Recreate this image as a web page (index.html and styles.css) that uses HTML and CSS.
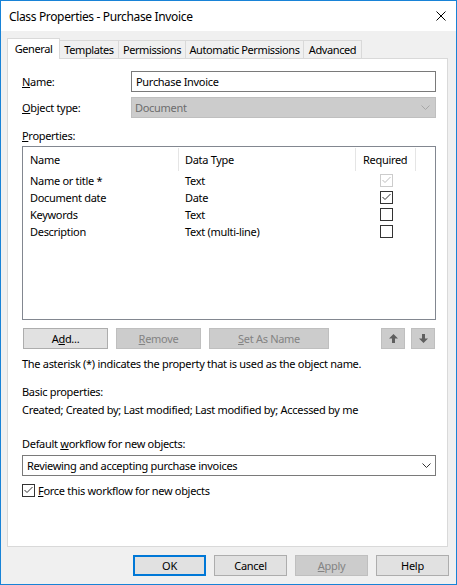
FILE: index.html
```html
<!DOCTYPE html>
<html>
<head>
<meta charset="utf-8">
<title>Class Properties - Purchase Invoice</title>
<link rel="stylesheet" href="styles.css">
</head>
<body>
<div class="window">
  <div class="titlebar">
    <span class="title">Class Properties - Purchase Invoice</span>
    <svg class="close" width="10" height="10" viewBox="0 0 10 10"><path d="M0.5 0.5L9.5 9.5M9.5 0.5L0.5 9.5" stroke="#000" stroke-width="1" fill="none"/></svg>
  </div>
  <div class="client">
    <div class="tabs">
      <div class="tab sel t-general">General</div>
      <div class="tab t-templates">Templates</div>
      <div class="tab t-perm">Permissions</div>
      <div class="tab t-auto">Automatic Permissions</div>
      <div class="tab t-adv">Advanced</div>
      <div class="tab-fill"></div>
    </div>
    <div class="panel">
      <div class="form-grid">
        <div class="lbl"><u>N</u>ame:</div>
        <div class="input">Purchase Invoice</div>
        <div class="lbl"><u>O</u>bject type:</div>
        <div class="combo disabled"><span>Document</span><svg class="chev" width="9" height="5" viewBox="0 0 9 5"><polyline points="0.5,0.5 4.5,4.5 8.5,0.5" fill="none" stroke="#a6a6a6" stroke-width="1"/></svg></div>
      </div>
      <div class="section-label"><u>P</u>roperties:</div>
      <div class="listbox">
        <div class="lv-row lv-head">
          <div class="c1">Name</div>
          <div class="c2">Data Type</div>
          <div class="c3">Required</div>
          <div class="c4"></div>
        </div>
        <div class="lv-row">
          <div class="c1">Name or title *</div>
          <div class="c2">Text</div>
          <div class="c3 cb"><svg width="13" height="13" viewBox="0 0 13 13"><rect x="0.5" y="0.5" width="12" height="12" fill="#fff" stroke="#cccccc"/><polyline points="2.5,6 5,8.5 10.5,3" fill="none" stroke="#bcbcbc" stroke-width="1"/></svg></div>
          <div class="c4"></div>
        </div>
        <div class="lv-row">
          <div class="c1">Document date</div>
          <div class="c2">Date</div>
          <div class="c3 cb"><svg width="13" height="13" viewBox="0 0 13 13"><rect x="0.5" y="0.5" width="12" height="12" fill="#fff" stroke="#333333"/><polyline points="2.5,6 5,8.5 10.5,3" fill="none" stroke="#333333" stroke-width="1"/></svg></div>
          <div class="c4"></div>
        </div>
        <div class="lv-row">
          <div class="c1">Keywords</div>
          <div class="c2">Text</div>
          <div class="c3 cb"><svg width="13" height="13" viewBox="0 0 13 13"><rect x="0.5" y="0.5" width="12" height="12" fill="#fff" stroke="#333333"/></svg></div>
          <div class="c4"></div>
        </div>
        <div class="lv-row">
          <div class="c1">Description</div>
          <div class="c2">Text (multi-line)</div>
          <div class="c3 cb"><svg width="13" height="13" viewBox="0 0 13 13"><rect x="0.5" y="0.5" width="12" height="12" fill="#fff" stroke="#333333"/></svg></div>
          <div class="c4"></div>
        </div>
      </div>
      <div class="btn-row">
        <div class="btn btn-add">A<u>d</u>d...</div>
        <div class="btn disabled btn-remove"><u>R</u>emove</div>
        <div class="btn disabled btn-setname"><u>S</u>et As Name</div>
        <div class="arrows">
          <div class="btn disabled btn-arrow"><svg width="9" height="9" viewBox="0 0 9 9"><path d="M4.5 0L9 4.5H6V9H3V4.5H0Z" fill="#5f5f5f"/></svg></div>
          <div class="btn disabled btn-arrow"><svg width="9" height="9" viewBox="0 0 9 9"><path d="M4.5 9L9 4.5H6V0H3V4.5H0Z" fill="#5f5f5f"/></svg></div>
        </div>
      </div>
      <div class="note">The asterisk (*) indicates the property that is used as the object name.</div>
      <div class="basic">
        <div>Basic properties:</div>
        <div>Created; Created by; Last modified; Last modified by; Accessed by me</div>
      </div>
      <div class="wf-label">Default <u>w</u>orkflow for new objects:</div>
      <div class="combo wf"><span>Reviewing and accepting purchase invoices</span><svg class="chev" width="9" height="5" viewBox="0 0 9 5"><polyline points="0.5,0.5 4.5,4.5 8.5,0.5" fill="none" stroke="#333333" stroke-width="1"/></svg></div>
      <div class="check-row">
        <svg width="13" height="13" viewBox="0 0 13 13"><rect x="0.5" y="0.5" width="12" height="12" fill="#fff" stroke="#333333"/><polyline points="2.5,6 5,8.5 10.5,3" fill="none" stroke="#333333" stroke-width="1"/></svg>
        <span><u>F</u>orce this workflow for new objects</span>
      </div>
    </div>
    <div class="footer">
      <div class="btn default">OK</div>
      <div class="btn">Cancel</div>
      <div class="btn disabled"><u>A</u>pply</div>
      <div class="btn">Help</div>
    </div>
  </div>
</div>
</body>
</html>
```

FILE: styles.css
```css
* { box-sizing: border-box; }
html, body { margin: 0; padding: 0; }
body {
  width: 457px;
  height: 585px;
  font-family: "Noto Sans", "Open Sans", sans-serif;
  font-size: 11px;
  letter-spacing: -0.3px;
  line-height: 15px;
  color: #000;
  background: #fff;
}
u { text-decoration: underline; text-underline-offset: 1px; }

.window {
  width: 457px;
  height: 585px;
  border: 1px solid #1883d7;
  background: #f0f0f0;
  display: flex;
  flex-direction: column;
}

.titlebar {
  height: 30px;
  flex: none;
  background: #fff;
  display: flex;
  align-items: center;
  justify-content: space-between;
  padding: 0 10px 0 8px;
}
.title { font-size: 12px; letter-spacing: -0.35px; }
.close { display: block; }

.client {
  flex: 1;
  min-height: 0;
  display: flex;
  flex-direction: column;
  padding: 7px 8px 8px 6px;
}

.tabs {
  flex: none;
  height: 21px;
  display: flex;
  align-items: flex-end;
}
.tab {
  height: 19px;
  border: 1px solid #d9d9d9;
  border-left: none;
  background: #f0f0f0;
  display: flex;
  align-items: center;
  justify-content: center;
  white-space: nowrap;
  letter-spacing: -0.4px;
}
.tab.sel {
  height: 21px;
  border-left: 1px solid #d9d9d9;
  border-bottom: none;
  background: #fff;
  padding-bottom: 1px;
}
.t-general { width: 53px; }
.t-templates { width: 59px; }
.t-perm { width: 67px; }
.t-auto { width: 118px; }
.t-adv { width: 58px; }
.tab-fill { flex: 1; height: 1px; background: #d9d9d9; }

.panel {
  flex: 1;
  background: #fff;
  border: 1px solid #d9d9d9;
  border-top: none;
  padding: 12px 11px 0 14px;
  display: flex;
  flex-direction: column;
}

.form-grid {
  display: grid;
  grid-template-columns: 109px 1fr;
  grid-auto-rows: 21px;
  row-gap: 5px;
  align-items: center;
}
.input {
  height: 21px;
  border: 1px solid #7a7a7a;
  padding-left: 4px;
  display: flex;
  align-items: center;
}
.combo {
  height: 21px;
  border: 1px solid #7a7a7a;
  background: #fff;
  display: flex;
  align-items: center;
  justify-content: space-between;
  padding: 0 4px 0 4px;
}
.combo.disabled {
  background: #cccccc;
  border-color: #bfbfbf;
  color: #6d6d6d;
  padding-left: 3px;
  padding-right: 5px;
}
.chev { display: block; }

.section-label { margin-top: 10px; }

.listbox {
  margin-top: 3px;
  height: 174px;
  border: 1px solid #828790;
  background: #fff;
}
.lv-row {
  display: grid;
  grid-template-columns: 156px 177px 60px 1fr;
  height: 17px;
  align-items: center;
  white-space: nowrap;
}
.lv-row .c1 { padding-left: 7px; }
.lv-row .c2 { padding-left: 6px; }
.lv-head { height: 25px; }
.lv-head > div {
  height: 23px;
  display: flex;
  align-items: center;
}
.lv-head .c1, .lv-head .c2, .lv-head .c3 { border-right: 1px solid #e5e5e5; }
.lv-head .c3 { padding-left: 7px; }
.cb { display: flex; justify-content: center; }
.cb svg { display: block; }

.btn-row {
  margin-top: 8px;
  display: flex;
  gap: 8px;
}
.btn {
  height: 21px;
  border: 1px solid #adadad;
  background: #e1e1e1;
  display: flex;
  align-items: center;
  justify-content: center;
  white-space: nowrap;
}
.btn.disabled {
  background: #cccccc;
  border-color: #bfbfbf;
  color: #838383;
}
.btn.default { border: 2px solid #0078d7; }
.btn-add { width: 85px; margin-left: 1px; }
.btn-remove { width: 85px; }
.btn-setname { width: 120px; }
.arrows { margin-left: auto; margin-right: 1px; display: flex; gap: 6px; }
.btn-arrow { width: 24px; }
.btn-arrow svg { display: block; }

.note { margin-top: 7px; }
.basic { margin-top: 12px; line-height: 18px; }
.wf-label { margin-top: 17px; }
.combo.wf { margin-top: 4px; padding-left: 4px; padding-right: 4px; }

.check-row {
  margin-top: 8px;
  display: flex;
  align-items: center;
  gap: 3px;
  height: 13px;
}
.check-row svg { display: block; flex: none; }

.footer {
  flex: none;
  margin-top: 8px;
  margin-right: -1px;
  display: flex;
  justify-content: flex-end;
  gap: 8px;
}
.footer .btn { width: 73px; }
```
